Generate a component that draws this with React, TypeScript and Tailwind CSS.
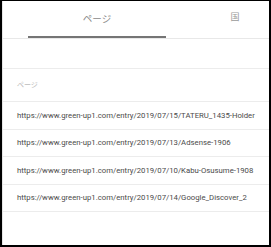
const urls = [
  "https://www.green-up1.com/entry/2019/07/15/TATERU_1435-Holder",
  "https://www.green-up1.com/entry/2019/07/13/Adsense-1906",
  "https://www.green-up1.com/entry/2019/07/10/Kabu-Osusume-1908",
  "https://www.green-up1.com/entry/2019/07/14/Google_Discover_2",
];

export default function App() {
  return (
    <div
      className="w-[271px] h-[247px] bg-white border-t border-l-2 border-r-2 border-b-2 border-black overflow-hidden"
      style={{ fontFamily: "Roboto, 'Noto Sans CJK JP', sans-serif" }}
    >
      <div className="h-full border-l border-[#e6e6e6] flex flex-col">
        {/* Tabs */}
        <div className="h-[38px] border-b border-[#e8e8e8] flex pl-[25px] overflow-hidden shrink-0">
          <div className="w-[138px] shrink-0 flex flex-col">
            <div className="flex-1 flex items-center justify-center text-[9.5px] text-[#8a8a8a] pt-[1px]">
              ページ
            </div>
            <div className="h-[2px] bg-[#757575]" />
          </div>
          <div className="w-[138px] shrink-0 flex items-center justify-center text-[9px] text-[#9a9a9a] pb-[4px]">
            国
          </div>
        </div>

        <div className="h-[30px] border-b border-[#ececec] shrink-0" />

        <div className="h-[33px] border-b border-[#ececec] flex items-center pl-[14px] text-[7px] text-[#bdbdbd] shrink-0">
          ページ
        </div>

        {urls.map((u, i) => (
          <div
            key={u}
            className={`${i % 2 === 0 ? "h-[28px]" : "h-[27px]"} border-b border-[#ececec] flex items-center pl-[14px] text-[7.75px] text-[#4a4a4a] whitespace-nowrap shrink-0`}
          >
            {u}
          </div>
        ))}
      </div>
    </div>
  );
}
